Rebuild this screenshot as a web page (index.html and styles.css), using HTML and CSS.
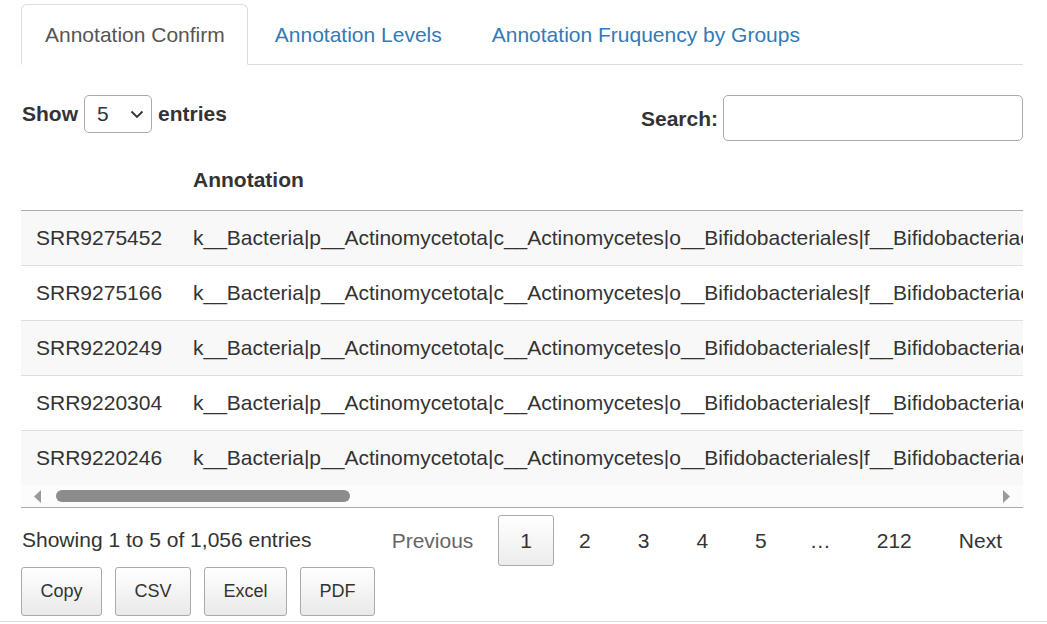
FILE: index.html
```html
<!DOCTYPE html>
<html>
<head>
<meta charset="utf-8">
<link rel="stylesheet" href="styles.css">
</head>
<body>
<div class="wrap">
  <ul class="tabs">
    <li class="tab active">Annotation Confirm</li>
    <li class="tab">Annotation Levels</li>
    <li class="tab">Annotation Fruquency by Groups</li>
  </ul>

  <div class="controls">
    <div class="length">
      <span class="lbl">Show</span>
      <div class="select"><span>5</span>
        <svg width="14" height="9" viewBox="0 0 14 9"><path d="M1.5 1.5 L7 7 L12.5 1.5" fill="none" stroke="#333" stroke-width="1.8"/></svg>
      </div>
      <span class="lbl">entries</span>
    </div>
    <div class="filter">
      <span class="lbl search-lbl">Search:</span>
      <div class="search"></div>
    </div>
  </div>

  <div class="scroll-body">
    <table class="grid">
      <thead>
        <tr><th class="c1"></th><th>Annotation</th></tr>
      </thead>
      <tbody>
        <tr class="odd"><td class="c1">SRR9275452</td><td>k__Bacteria|p__Actinomycetota|c__Actinomycetes|o__Bifidobacteriales|f__Bifidobacteriaceae|g__Bifidobacterium|s__Bifidobacterium_longum</td></tr>
        <tr><td class="c1">SRR9275166</td><td>k__Bacteria|p__Actinomycetota|c__Actinomycetes|o__Bifidobacteriales|f__Bifidobacteriaceae|g__Bifidobacterium|s__Bifidobacterium_longum</td></tr>
        <tr class="odd"><td class="c1">SRR9220249</td><td>k__Bacteria|p__Actinomycetota|c__Actinomycetes|o__Bifidobacteriales|f__Bifidobacteriaceae|g__Bifidobacterium|s__Bifidobacterium_longum</td></tr>
        <tr><td class="c1">SRR9220304</td><td>k__Bacteria|p__Actinomycetota|c__Actinomycetes|o__Bifidobacteriales|f__Bifidobacteriaceae|g__Bifidobacterium|s__Bifidobacterium_longum</td></tr>
        <tr class="odd"><td class="c1">SRR9220246</td><td>k__Bacteria|p__Actinomycetota|c__Actinomycetes|o__Bifidobacteriales|f__Bifidobacteriaceae|g__Bifidobacterium|s__Bifidobacterium_longum</td></tr>
      </tbody>
    </table>
  </div>
  <div class="hscroll">
    <svg class="arrow-l" width="9" height="13" viewBox="0 0 9 13"><path d="M8 0 L8 13 L1 6.5 Z" fill="#9a9a9a"/></svg>
    <div class="thumb"></div>
    <svg class="arrow-r" width="9" height="13" viewBox="0 0 9 13"><path d="M1 0 L1 13 L8 6.5 Z" fill="#9a9a9a"/></svg>
  </div>

  <div class="footer">
    <div class="info">Showing 1 to 5 of 1,056 entries</div>
    <div class="paginate">
      <span class="pbtn disabled">Previous</span>
      <span class="pbtn current">1</span>
      <span class="pbtn">2</span>
      <span class="pbtn">3</span>
      <span class="pbtn">4</span>
      <span class="pbtn">5</span>
      <span class="ellipsis">…</span>
      <span class="pbtn">212</span>
      <span class="pbtn">Next</span>
    </div>
  </div>

  <div class="buttons">
    <span class="dtbtn">Copy</span>
    <span class="dtbtn">CSV</span>
    <span class="dtbtn">Excel</span>
    <span class="dtbtn">PDF</span>
  </div>
</div>
<div class="bottom-rule"></div>
</body>
</html>
```

FILE: styles.css
```css
* { box-sizing: border-box; }
html, body { margin: 0; padding: 0; background: #fff; }
body {
  font-family: "Liberation Sans", Arial, sans-serif;
  font-size: 21px;
  line-height: 30px;
  color: #333;
}
.wrap {
  margin: 0 24px 0 21px;
  padding-top: 4px;
}
.tabs {
  list-style: none;
  margin: 0;
  padding: 0;
  display: flex;
  border-bottom: 1px solid #ddd;
}
.tab {
  padding: 15px 22px 14px 23px;
  margin-right: 3px;
  margin-bottom: -1px;
  border: 1px solid transparent;
  border-radius: 6px 6px 0 0;
  color: #337ab7;
}
.tab.active {
  color: #555;
  background: #fff;
  border-color: #ddd;
  border-bottom-color: #fff;
}
.controls {
  display: flex;
  justify-content: space-between;
  align-items: flex-start;
  padding-top: 30px;
  margin-bottom: 9px;
}
.lbl { font-weight: bold; }
.length {
  display: flex;
  align-items: center;
  gap: 6px;
  padding-left: 1px;
}
.select {
  width: 68px;
  height: 38px;
  border: 1px solid #aaa;
  border-radius: 5px;
  display: flex;
  align-items: center;
  justify-content: space-between;
  padding: 0 7px 0 12px;
  background: #fff;
}
.filter {
  display: flex;
  align-items: center;
  gap: 5px;
}
.search-lbl { padding-top: 2px; }
.search {
  width: 300px;
  height: 46px;
  border: 1px solid #aaa;
  border-radius: 5px;
  background: #fff;
}
.scroll-body {
  width: 100%;
  overflow: hidden;
}
.grid {
  border-collapse: collapse;
  white-space: nowrap;
}
.grid th {
  text-align: left;
  font-weight: bold;
  padding: 15px 15px;
  border-bottom: 1px solid #aaa;
}
.grid td {
  padding: 12px 15px 12px 15px;
  border-top: 1px solid #ddd;
}
.grid tbody tr:first-child td { border-top: none; height: 54px; }
.grid .c1 { width: 157px; min-width: 157px; }
.grid tr.odd td { background: #f8f8f8; }
.hscroll {
  height: 23px;
  background: #fcfcfc;
  border-bottom: 1px solid #aaa;
  display: flex;
  align-items: center;
}
.arrow-l { margin-left: 12px; }
.thumb {
  margin-left: 14px;
  width: 294px;
  height: 12px;
  border-radius: 6px;
  background: #8c8c8c;
}
.arrow-r { margin-left: auto; margin-right: 12px; }
.footer {
  display: flex;
  justify-content: space-between;
  align-items: center;
  padding-top: 7px;
}
.info { padding-left: 1px; margin-top: -2px; }
.paginate {
  display: flex;
  align-items: center;
  margin-right: -1px;
}
.pbtn {
  padding: 10px 21px;
  margin-left: 3px;
  border: 1px solid transparent;
  border-radius: 3px;
  line-height: 29px;
  color: #333;
  min-width: 32px;
  text-align: center;
}
.pbtn.disabled { color: #666; }
.pbtn.current {
  border-color: #aaa;
  background: linear-gradient(to bottom, #fff 0%, #ececec 100%);
}
.ellipsis {
  padding: 0 21px 0 18px;
  margin-left: 3px;
}
.buttons {
  display: flex;
  gap: 13px;
  margin-top: 1px;
}
.dtbtn {
  font-size: 18px;
  line-height: 29px;
  padding: 9px 18.5px;
  border: 1px solid #aaa;
  border-radius: 3px;
  background: linear-gradient(to bottom, #fff 0%, #e9e9e9 100%);
  color: #333;
}
.bottom-rule {
  margin-top: 5px;
  border-top: 1px solid #ddd;
}
```
